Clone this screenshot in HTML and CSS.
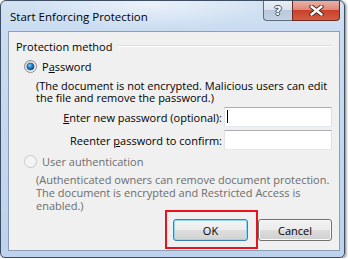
FILE: index.html
```html
<!DOCTYPE html>
<html lang="en">
<head>
<meta charset="utf-8">
<title>Start Enforcing Protection</title>
<link rel="stylesheet" href="styles.css">
</head>
<body>
<div class="window">
  <div class="titlebar">
    <span class="title">Start Enforcing Protection</span>
    <div class="caption-btns">
      <span class="cb help">?</span>
      <span class="cb close">
        <svg width="15" height="11" viewBox="0 0 15 11">
          <path d="M2.5 1.5 L12.5 9.5 M12.5 1.5 L2.5 9.5" stroke="#4a2a25" stroke-width="4.4" stroke-linecap="round" fill="none"/>
          <path d="M2.5 1.5 L12.5 9.5 M12.5 1.5 L2.5 9.5" stroke="#ffffff" stroke-width="2.4" stroke-linecap="round" fill="none"/>
        </svg>
      </span>
    </div>
  </div>
  <div class="client">
    <div class="group-head"><span>Protection method</span><span class="rule"></span></div>
    <div class="radio-row">
      <svg class="radio" width="13" height="13" viewBox="0 0 13 13">
        <defs>
          <linearGradient id="rg" x1="0" y1="0" x2="1" y2="1">
            <stop offset="0" stop-color="#d6d6d6"/><stop offset="1" stop-color="#fbfbfb"/>
          </linearGradient>
          <radialGradient id="dot" cx="0.4" cy="0.35" r="0.7">
            <stop offset="0" stop-color="#8fd3f8"/><stop offset="0.45" stop-color="#2a7fc8"/><stop offset="1" stop-color="#0b3e7a"/>
          </radialGradient>
        </defs>
        <circle cx="6.5" cy="6.5" r="6" fill="url(#rg)" stroke="#8a8a8a"/>
        <circle cx="6.5" cy="6.5" r="3.6" fill="url(#dot)" stroke="#174f8c" stroke-width="0.6"/>
      </svg>
      <span>P<u>a</u>ssword</span>
    </div>
    <p class="note">(The document is not encrypted. Malicious users can edit<br>the file and remove the password.)</p>
    <div class="fields">
      <label class="field-label"><u>E</u>nter new password (optional):</label>
      <div class="input"><span class="caret"></span></div>
      <label class="field-label">Reenter <u>p</u>assword to confirm:</label>
      <div class="input"></div>
    </div>
    <div class="radio-row disabled">
      <svg class="radio" width="13" height="13" viewBox="0 0 13 13">
        <circle cx="6.5" cy="6.5" r="6" fill="#f4f4f4" stroke="#c8c8c8"/>
      </svg>
      <span>User authentication</span>
    </div>
    <p class="note disabled note-wide">(Authenticated owners can remove document protection.<br>The document is encrypted and Restricted Access is<br>enabled.)</p>
    <div class="buttons">
      <span class="mark"><button class="btn default">OK</button></span>
      <button class="btn">Cancel</button>
    </div>
  </div>
</div>
</body>
</html>
```
FILE: styles.css
```css
* { box-sizing: border-box; }

html, body {
  margin: 0;
  background: #ffffff;
}

body {
  font-family: "Open Sans", "Noto Sans", sans-serif;
  font-size: 11px;
  color: #000000;
}

.window {
  width: 345px;
  height: 258px;
  display: flex;
  flex-direction: column;
  border: 1px solid #3e4e62;
  border-radius: 6px 6px 5px 5px;
  padding: 0 4px 6px 7px;
  background:
    radial-gradient(ellipse 120px 26px at 150px 2px, rgba(255,255,255,0.55), rgba(255,255,255,0) 100%),
    linear-gradient(to bottom, #d3e2f3 0px, #c9dcf1 30px, #bdd3ed 100%);
  box-shadow: 1px 1px 3px rgba(0,0,0,0.55);
}

.titlebar {
  height: 30px;
  display: flex;
  align-items: center;
}

.title {
  padding-left: 2px;
  font-size: 11.5px;
  color: #000000;
  flex: 1;
  margin-top: 1px;
}

.caption-btns {
  align-self: flex-start;
  display: flex;
  height: 20px;
}

.cb {
  display: flex;
  align-items: center;
  justify-content: center;
  height: 20px;
  border: 1px solid #5d6c80;
  border-top: none;
}

.help {
  width: 29px;
  border-right: none;
  border-radius: 0 0 0 4px;
  background: linear-gradient(to bottom, #e9eff6 0%, #d8e2ee 45%, #b9c8da 50%, #c4d2e3 100%);
  color: #ffffff;
  font-family: "DejaVu Sans", sans-serif;
  font-weight: bold;
  font-size: 13px;
  line-height: 1;
  text-shadow: 1px 0 #44505e, -1px 0 #44505e, 0 1px #44505e, 0 -1px #44505e;
}

.close {
  width: 48px;
  border-radius: 0 0 4px 0;
  background: linear-gradient(to bottom, #eab0a4 0%, #df8a79 45%, #c9412b 50%, #d45d42 100%);
  border-color: #6b2a22;
}

.client {
  flex: 1;
  display: flex;
  flex-direction: column;
  border: 1px solid #8e9fb4;
  background: #f0f0f0;
  padding: 7px 7px 0 7px;
}

.group-head {
  display: flex;
  align-items: center;
  height: 15px;
  line-height: 15px;
  gap: 5px;
}

.rule {
  flex: 1;
  height: 2px;
  margin-top: -2px;
  border-top: 1px solid #d5dfe5;
  border-bottom: 1px solid #ffffff;
}

.radio-row {
  display: flex;
  align-items: center;
  gap: 5px;
  height: 15px;
  line-height: 15px;
  margin-top: 5px;
  padding-left: 8px;
}

.radio { display: block; flex: none; }

.note {
  margin: 6px 0 0 0;
  padding-left: 20px;
  line-height: 12px;
}

.note-wide {
  line-height: 13px;
  margin-top: 4px;
}

.disabled { color: #6d6d6d; }

.radio-row.disabled { margin-top: 4px; }

.fields {
  margin-top: 3px;
  display: grid;
  grid-template-columns: 1fr 108px;
  grid-auto-rows: 20px;
  column-gap: 2px;
  row-gap: 3px;
}

.field-label {
  justify-self: end;
  align-self: center;
  line-height: 15px;
}

.input {
  background: #ffffff;
  border: 1px solid #abadb3;
  border-color: #abadb3 #dbdfe6 #e3e9ef #e2e3ea;
  position: relative;
  padding: 2px 0 0 2px;
}

.caret {
  display: block;
  width: 1px;
  height: 13px;
  background: #000000;
}

.buttons {
  margin-top: 7px;
  display: flex;
  justify-content: flex-end;
  gap: 10px;
}

.mark {
  position: relative;
  display: block;
}

.mark::after {
  content: "";
  position: absolute;
  top: -9px;
  left: -8px;
  right: -10px;
  bottom: -8px;
  border: 2px solid #e8141c;
  pointer-events: none;
}

.btn {
  display: block;
  height: 22px;
  width: 74px;
  margin: 0;
  padding: 0;
  font-family: "Open Sans", "Noto Sans", sans-serif;
  font-size: 11px;
  color: #000000;
  border: 1px solid #707070;
  border-radius: 3px;
  background: linear-gradient(to bottom, #f2f2f2 0%, #ebebeb 50%, #dddddd 51%, #cfcfcf 100%);
  box-shadow: inset 0 0 0 1px #fcfcfc;
}

.btn.default {
  width: 75px;
  border-color: #3c7fb1;
  box-shadow: inset 0 0 0 1px #8fd8f5;
  background: linear-gradient(to bottom, #f4f4f4 0%, #ececec 50%, #dedede 51%, #d2d2d2 100%);
}
```
